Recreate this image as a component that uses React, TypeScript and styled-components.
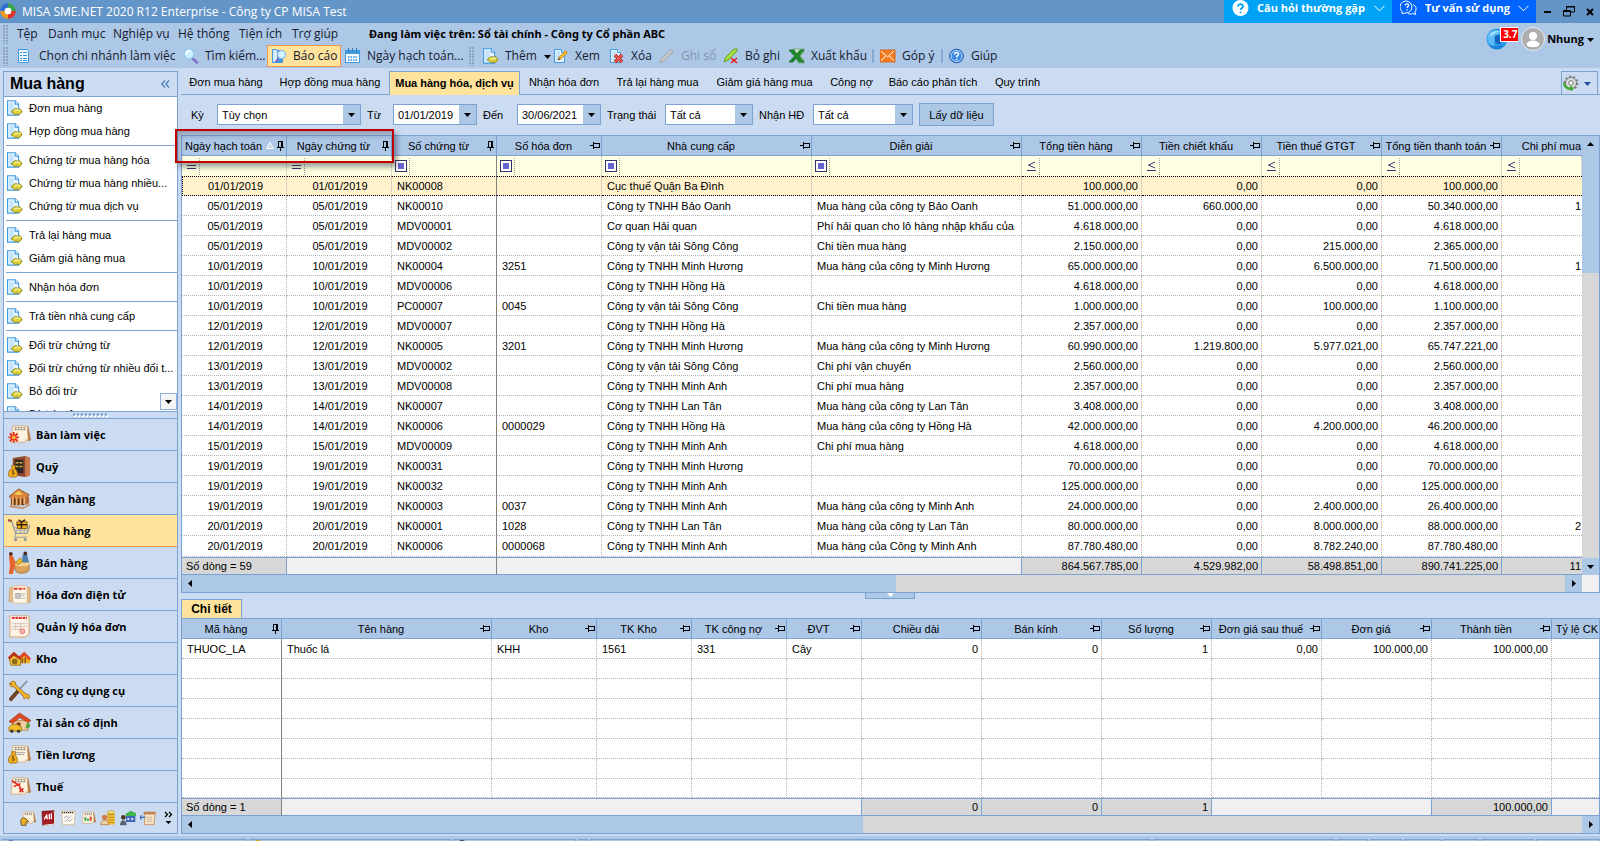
import React from 'react';
import styled, { createGlobalStyle, css } from 'styled-components';

const c = {
  title: '#6495c8',
  bar: '#adc7e7',
  panel: '#cbdcf2',
  line: '#7ba2d0',
  active: '#ffe39c',
  orange: '#f79646',
  filter: '#ffffe1',
  selected: '#fff2cc',
  dot: '#b4b4b4',
  sum: '#d7d7d7',
  sumEmpty: '#f0f0f0',
};
const uiFont = '"Open Sans", "Noto Sans", sans-serif';
const gridFont = '"Liberation Sans", Arial, sans-serif';

const GlobalStyle = createGlobalStyle`
  *, *::before, *::after { box-sizing: border-box; }
  body { margin: 0; background: ${c.panel}; }
  button, input, select { font: inherit; color: inherit; margin: 0; padding: 0; border: 0; background: none; border-radius: 0; }
  button { cursor: default; white-space: nowrap; }
  a { color: inherit; text-decoration: none; }
  svg { display: block; flex: none; }
`;

const Shell = styled.div`
  height: 100vh;
  overflow: hidden;
  display: flex;
  flex-direction: column;
  font: 11px/14px ${gridFont};
  color: #000;
  background: ${c.panel};
`;

/* ---------- title bar ---------- */
const TitleBar = styled.header`
  flex: none;
  display: flex;
  height: 23px;
  background: ${c.title};
  color: #fff;
  font: 12px/23px ${uiFont};
`;
const TitleName = styled.h1`
  flex: 1;
  margin: 0;
  padding-left: 6px;
  font: inherit;
  white-space: nowrap;
`;
const LogoBox = styled.span`
  padding-top: 3px;
`;
const HelpButton = styled.button<{ $bg: string; $w: number }>`
  display: flex;
  align-items: center;
  gap: 8px;
  width: ${(p) => p.$w}px;
  padding: 0 7px 7px 8px;
  background: ${(p) => p.$bg};
  font: bold 11px/16px ${uiFont};
  span { flex: 1; text-align: left; }
`;
const WindowButtons = styled.div`
  display: flex;
  width: 64px;
  justify-content: space-between;
  align-items: center;
  padding: 0 6px 0 8px;
`;

/* ---------- menu and toolbar ---------- */
const CommandArea = styled.div`
  flex: none;
  display: flex;
  height: 45px;
  background: ${c.bar};
  font: 12px/18px ${uiFont};
  color: #14202e;
`;
const Bars = styled.div`
  flex: 1;
  display: flex;
  flex-direction: column;
`;
const Bar = styled.div`
  display: flex;
  align-items: center;
  height: 22px;
  padding-left: 3px;
`;
const Grip = styled.i`
  width: 5px;
  height: 19px;
  margin-right: 5px;
  background-image: radial-gradient(circle at 1px 1px, #8ba3bf 1px, transparent 1px);
  background-size: 3px 3px;
`;
const MenuButton = styled.button<{ $w: number }>`
  width: ${(p) => p.$w}px;
  padding-left: 4px;
  text-align: left;
`;
const WorkingOn = styled.strong`
  white-space: nowrap;
  font: bold 11px/18px "Noto Sans", "Open Sans", sans-serif;
  color: #000;
`;
const ToolButton = styled.button<{ $w: number; $active?: boolean }>`
  display: flex;
  align-items: center;
  gap: 6px;
  width: ${(p) => p.$w}px;
  height: 22px;
  padding-left: 4px;
  ${(p) =>
    p.$active &&
    css`
      padding-left: 3px;
      background: ${c.active};
      border: 1px solid ${c.orange};
    `}
  &:disabled { color: #8494a8; }
`;
const ToolSeparator = styled.i`
  width: 2px;
  height: 14px;
  margin: 0 2px 0 1px;
  background: #87aad4;
`;
const UserArea = styled.div`
  display: flex;
  align-items: flex-start;
  padding: 4px 5px 0 0;
  font-weight: bold;
  color: #000;
`;
const GlobeBox = styled.div`
  position: relative;
  width: 35px;
  padding-top: 1px;
`;
const Badge = styled.span`
  position: absolute;
  left: 14px;
  top: 0;
  width: 18px;
  height: 15px;
  padding-left: 2px;
  border: 1px solid #fff;
  border-right: 0;
  background: #f00;
  color: #fff;
  font: bold 10px/13px ${uiFont};
  white-space: nowrap;
`;
const UserButton = styled.button`
  display: flex;
  align-items: center;
  gap: 2px;
  font-size: 11px;
`;

/* ---------- body ---------- */
const Body = styled.div`
  flex: none;
  display: flex;
  gap: 3px;
  padding: 3px 0 2px 3px;
`;
const Sidebar = styled.aside`
  flex: none;
  display: flex;
  flex-direction: column;
  width: 175px;
  border: 1px solid ${c.line};
`;
const SideHeader = styled.div`
  display: flex;
  align-items: center;
  justify-content: space-between;
  height: 25px;
  padding: 0 7px 0 6px;
  border-bottom: 1px solid ${c.line};
  color: #4f7db5;
  h2 { margin: 0; font: bold 16px/24px ${gridFont}; color: #000; }
`;
const SideList = styled.nav`
  position: relative;
  height: 315px;
  overflow: hidden;
  background: #fff;
  border-bottom: 1px solid ${c.line};
`;
const SideLink = styled.a`
  display: flex;
  align-items: center;
  gap: 6px;
  height: 23px;
  padding: 0 0 2px 3px;
  white-space: nowrap;
`;
const SideRule = styled.hr`
  height: 1px;
  margin: 2px 0 3px 2px;
  border: 0;
  background: ${c.line};
`;
const MoreButton = styled.button`
  position: absolute;
  right: 0;
  bottom: 1px;
  display: grid;
  place-items: center;
  width: 17px;
  height: 17px;
  background: #f4f4f4;
  border: 1px solid #8fb0dc;
`;
const SideSplit = styled.div`
  display: grid;
  place-items: center;
  height: 6px;
`;
const NavButton = styled.button<{ $active?: boolean; $afterActive?: boolean }>`
  display: flex;
  align-items: center;
  gap: 5px;
  height: 32px;
  padding-left: 4px;
  border-top: 1px solid ${(p) => (p.$afterActive ? c.orange : c.line)};
  background: ${(p) => (p.$active ? c.active : 'none')};
  font: bold 11px/16px ${uiFont};
  color: #000;
`;
const Tray = styled.div`
  display: flex;
  align-items: center;
  gap: 4px;
  height: 30px;
  padding: 0 4px 0 16px;
  border-top: 1px solid ${c.line};
`;
const TrayMore = styled.button`
  flex: 1;
  display: flex;
  justify-content: flex-end;
`;

const Content = styled.main`
  flex: 1;
  min-width: 0;
  display: flex;
  flex-direction: column;
`;
const TabBar = styled.div`
  display: flex;
  height: 24px;
  border-bottom: 1px solid ${c.line};
`;
const Tab = styled.button<{ $w: number; $active?: boolean }>`
  flex: none;
  width: ${(p) => p.$w}px;
  height: 23px;
  padding-bottom: 1px;
  ${(p) =>
    p.$active &&
    css`
      height: 24px;
      font-weight: bold;
      color: #000;
      background: ${c.active};
      border: 1px solid ${c.line};
      border-bottom: 0;
    `}
`;
const GearButton = styled.button`
  display: flex;
  align-items: center;
  justify-content: space-between;
  width: 37px;
  height: 24px;
  margin: 0 2px 0 auto;
  padding: 0 5px 0 1px;
  border: 1px solid ${c.line};
`;
const Filters = styled.form`
  display: flex;
  align-items: center;
  gap: 6px;
  height: 40px;
  padding: 0 0 1px 10px;
`;
const Label = styled.label<{ $w: number }>`
  width: ${(p) => p.$w}px;
  white-space: nowrap;
`;
const Field = styled.span<{ $w: number }>`
  display: flex;
  width: ${(p) => p.$w}px;
  height: 21px;
  background: #fff;
  border: 1px solid ${c.line};
  select, input { flex: 1; min-width: 0; padding-left: 4px; appearance: none; outline: 0; }
`;
const FieldArrow = styled.i`
  display: grid;
  place-items: center;
  width: 17px;
  margin-left: -1px;
  background: ${c.bar};
  pointer-events: none;
`;
const LoadButton = styled.button`
  width: 75px;
  height: 23px;
  background: ${c.bar};
  border: 1px solid ${c.line};
`;

/* ---------- grids ---------- */
const GridFrame = styled.section`
  position: relative;
  border: 1px solid ${c.line};
  background: #fff;
`;
const GridRow = styled.div`
  display: flex;
`;
const Table = styled.table<{ $lastRow: number }>`
  flex: 1;
  width: 100%;
  min-width: 0;
  table-layout: fixed;
  border-collapse: separate;
  border-spacing: 0;
  tbody tr:last-child td { height: ${(p) => p.$lastRow}px; }
`;
const Th = styled.th`
  height: 20px;
  padding: 0;
  font-weight: normal;
  background: ${c.bar};
  border-right: 1px solid ${c.line};
  border-bottom: 1px solid ${c.line};
  overflow: hidden;
  &:last-child { border-right: 0; }
`;
const ThInner = styled.div<{ $end?: boolean }>`
  display: flex;
  align-items: center;
  padding-right: 1px;
  white-space: nowrap;
  span { flex: 1; text-align: ${(p) => (p.$end ? 'right' : 'center')}; }
`;
const Td = styled.td<{ $align?: string; $pin?: boolean; $sel?: boolean }>`
  height: 20px;
  padding: 0 3px 0 5px;
  text-align: ${(p) => p.$align || 'left'};
  white-space: nowrap;
  overflow: hidden;
  border-right: 1px ${(p) => (p.$pin ? 'solid #808080' : `dotted ${c.dot}`)};
  border-bottom: 1px dotted ${c.dot};
  &:last-child { border-right: 0; padding-right: 1px; }
  ${(p) =>
    p.$sel &&
    css`
      background: ${c.selected};
      border-top: 1px dotted #000;
      border-bottom: 1px dotted #000;
      &:first-child { border-left: 1px dotted #000; }
    `}
`;
const FilterTd = styled.td<{ $pin?: boolean }>`
  height: 20px;
  padding: 0;
  background: ${c.filter};
  border-right: 1px ${(p) => (p.$pin ? 'solid #808080' : `dotted ${c.dot}`)};
`;
const FilterCell = styled.div`
  display: flex;
  align-items: center;
  height: 19px;
  padding-left: 2px;
  color: #33336b;
  button { display: grid; place-items: center; width: 15px; height: 17px; }
  input { flex: 1; min-width: 0; height: 17px; border-left: 1px dotted #999; outline: 0; }
`;
const SumTd = styled.td<{ $filled?: boolean; $pin?: boolean }>`
  height: 18px;
  padding: 0 3px 0 4px;
  text-align: right;
  white-space: nowrap;
  background: ${(p) => (p.$filled ? c.sum : c.sumEmpty)};
  border: solid ${c.line};
  border-width: 1px 1px 1px 0;
  ${(p) => p.$pin && 'border-right-color: #808080;'}
  &:first-child { text-align: left; }
  &:last-child { border-right: 0; padding-right: 1px; }
`;
const VScroll = styled.div`
  flex: none;
  display: flex;
  flex-direction: column;
  width: 17px;
  background: ${c.sum};
`;
const ScrollButton = styled.button`
  flex: none;
  display: grid;
  place-items: center;
  width: 17px;
  height: 17px;
  background: ${c.bar};
`;
const VThumb = styled.div`
  height: 120px;
  margin-bottom: auto;
  background: ${c.bar};
`;
const HScroll = styled.div`
  display: flex;
  height: 17px;
  background: ${c.sum};
`;
const HTrack = styled.div`
  flex: 1;
`;
const HThumb = styled.div<{ $pct: number }>`
  width: ${(p) => p.$pct}%;
  height: 17px;
  background: ${c.bar};
`;
const Corner = styled.div`
  width: 17px;
  background: ${c.sumEmpty};
`;
const Highlight = styled.div`
  position: absolute;
  left: -7px;
  top: -7px;
  width: 219px;
  height: 34px;
  border: 2px solid #c00000;
  box-shadow: 3px 4px 5px rgba(40, 50, 70, 0.45), inset 3px 4px 5px rgba(40, 50, 70, 0.35);
  pointer-events: none;
`;
const SplitBar = styled.div`
  display: flex;
  justify-content: center;
  height: 6px;
  padding-right: 1px;
`;
const SplitHandle = styled.button`
  display: grid;
  place-items: start center;
  width: 50px;
  height: 6px;
  background: ${c.bar};
  border: 1px solid ${c.line};
  border-top: 0;
`;
const DetailTab = styled.button`
  align-self: flex-start;
  width: 61px;
  height: 19px;
  background: ${c.active};
  border: 1px solid ${c.line};
  border-bottom: 0;
  font-weight: bold;
  font-size: 12px;
  color: #000;
`;

/* ---------- status bar ---------- */
const StatusBar = styled.footer`
  flex: none;
  display: flex;
  gap: 2px;
  height: 24px;
  padding: 3px 0 0 2px;
  background: ${c.bar};
`;
const StatusCell = styled.div<{ $w?: number }>`
  ${(p) => (p.$w ? `width: ${p.$w}px;` : 'flex: 1;')}
  border: 1px solid ${c.line};
  padding-left: 3px;
`;
const StatusDot = styled.i<{ $color: string }>`
  display: block;
  width: 10px;
  height: 10px;
  border-radius: 5px 5px 0 0;
  background: ${(p) => p.$color};
`;

/* ---------- icons ---------- */
const Tri = ({ dir, color = '#000' }: { dir: 'up' | 'down' | 'left' | 'right'; color?: string }) => {
  const d = { up: 'M1 6h7L4.500 2z', down: 'M1 3h7L4.500 7z', left: 'M6 1v7L2 4.500z', right: 'M3 1v7l4-3.500z' }[dir];
  return (
    <svg width="9" height="9" viewBox="0 0 9 9"><path d={d} fill={color} /></svg>
  );
};
const Chevron = () => (
  <svg width="11" height="7" viewBox="0 0 11 7" fill="none" stroke="#fff"><path d="M.5 .8L5.500 5.800l5-5" /></svg>
);
const Pin = ({ up }: { up?: boolean }) => (
  <svg width="10" height="10" viewBox="0 0 10 10" fill="none" stroke="#000" shapeRendering="crispEdges">
    {up ? (
      <path d="M3.500 6V.5h3V6M7.500 0v6M2 6.500h7M5.500 7v3" />
    ) : (
      <path d="M0 4.500h3M3.500 1v7M4 2.500h5.500v4M4 6.500h6" />
    )}
  </svg>
);
const Page = () => (
  <>
    <path d="M1.500 1.500h7l3 3v10h-10z" fill="#e9f5ff" stroke="#3f9be0" />
    <path d="M3 3h4v10H3z" fill="#c4e4fb" />
    <path d="M8.500 1.500v3h3" fill="#fff" stroke="#3f9be0" />
  </>
);
const Ic = ({ children, s = 16 }: { children: React.ReactNode; s?: number }) => (
  <svg width={s} height={s} viewBox={s > 16 ? '0 0 24 24' : '0 0 16 16'} aria-hidden="true">{children}</svg>
);
const DocIcon = () => (
  <svg width="16" height="16" viewBox="1 0.8 14.500 14.500" aria-hidden="true">
    <Page />
    <path d="M7 9.500l2-1 1.500.7 2-.5 1 1.300 1.200.9-.9 1.600-1.500 1.500-2.300-.4-2 .4-1.200-1.300L4.800 11.500z" fill="#dccf3c" stroke="#94871a" strokeWidth=".9" />
    <path d="M7.500 10.800c2-1 4-1 5.500-.5" stroke="#fbf6a0" fill="none" />
  </svg>
);
const toolIcons: Record<string, React.ReactNode> = {
  branch: <Ic><path d="M1.500 1.500h8l2 2v11h-10z" fill="#eef7ff" stroke="#3f9be0" /><path d="M3 4.500h2m1 0h4M3 7.500h2m1 0h4M3 10.500h2m1 0h4M3 12.500h2m1 0h4" stroke="#3a8fd8" /></Ic>,
  find: <Ic><path d="M9.500 10.500l4.500 4" stroke="#8177c7" strokeWidth="2.600" strokeLinecap="round" /><circle cx="6" cy="6" r="5" fill="#cdefff" stroke="#8cc5ec" strokeWidth="1.200" /><path d="M3 6a3 3 0 0 1 4-3" stroke="#fff" fill="none" strokeWidth="1.500" /></Ic>,
  report: <Ic><path d="M1.500 2.500h10v12h-10z" fill="#3f9be0" stroke="#3f9be0" /><path d="M1.500 1.500h4l1 1.500V14l-5 .5z" fill="#d8eeff" stroke="#3f9be0" /><path d="M8 10l-3.500 4" stroke="#7e74c4" strokeWidth="2" /><circle cx="10.500" cy="6.500" r="4" fill="#d6f2ff" stroke="#86b7e0" strokeWidth="1.200" /></Ic>,
  calendar: <Ic><rect x=".5" y="2.500" width="14" height="12" fill="#f5fbff" stroke="#3f9be0" /><path d="M1 3h13v3H1z" fill="#3f9be0" /><path d="M3.500 0v4M7.500 0v4M11.500 0v4" stroke="#2f79bb" /><path d="M3 9h9M3 12h9" stroke="#3a8fd8" strokeWidth="1.500" strokeDasharray="1.500 1" /></Ic>,
  add: <DocIcon />,
  view: <Ic><Page /><path d="M5 12l1-3 6.500-6.500 2 2L8 11z" fill="#f4b934" stroke="#b9801d" strokeWidth=".7" /><path d="M5 12l.8-2.300 1.500 1.500z" fill="#5a4a2c" /></Ic>,
  remove: <Ic><Page /><path d="M6 7l7 7m0-7l-7 7" stroke="#a82323" strokeWidth="3.400" /><path d="M6 7l7 7m0-7l-7 7" stroke="#e55a4c" strokeWidth="2" /></Ic>,
  post: <Ic><path d="M1 15l1.500-4.500L11 2l3 0 0 2-8.500 9z" fill="#c3c6ca" stroke="#9da2a8" strokeWidth=".8" /></Ic>,
  unpost: <Ic><path d="M1 14l1.500-4.500L11 1l3 0 0 2-8.500 9z" fill="#a5dd3e" stroke="#5b9a1b" strokeWidth=".9" /><path d="M8 10l6 5m0-5l-6 5" stroke="#e11" strokeWidth="1.400" /></Ic>,
  excel: <Ic><path d="M4 1h11v3l-4 4 4 4v3H9z" fill="#cfe8cf" stroke="#4d9a52" strokeWidth=".7" /><path d="M0 2h5l3 4 3-4h4l-5 6 5 6h-5L7.500 10 4 14H0l5.500-6z" fill="#1f8a2d" stroke="#0f5f1b" strokeWidth=".7" /></Ic>,
  mail: <Ic><rect y="2" width="15" height="12" fill="#f47b20" stroke="#d65f0c" strokeWidth=".8" /><path d="M1 3l6.500 6L14 3M1 13l4.500-5M14 13L9.500 8" fill="none" stroke="#fff" /></Ic>,
  help: <Ic><circle cx="7.500" cy="8" r="6.800" fill="#3c8be0" stroke="#1c5aa5" /><circle cx="7.500" cy="8" r="5.600" fill="none" stroke="#b9dcfb" /><path d="M5.500 6.500c0-3 4.300-2.600 4 0-.2 1.200-1.800 1.300-1.900 2.800M7.600 10.800v1.400" fill="none" stroke="#fff" strokeWidth="1.500" /></Ic>,
};

const Card = ({ children, fill = '#fbf3e0' }: { children?: React.ReactNode; fill?: string }) => (
  <>
    <path d="M19 3l2 0 3 15-3 1z" fill="#b57a45" />
    <path d="M5 3h15l1 14-3 3H3z" fill={fill} stroke="#d0a06c" strokeWidth=".8" />
    <path d="M18 20l3-3-3 .5z" fill="#e0b27c" />
    <path d="M7 5h12M7 7h11" stroke="#6b5a4a" strokeDasharray="2 1" />
    {children}
  </>
);
const Bag = ({ x = 0, y = 0 }) => (
  <g transform={`translate(${x} ${y})`}>
    <path d="M4 1h4l-1 3c3 2 4 8 1 9H2c-3-2-1-8 2-9z" fill="#f4b321" stroke="#9a6310" strokeWidth=".8" />
    <path d="M6.500 6H4.500v2h2v2h-2.500M5.200 5v6" stroke="#7d4a08" fill="none" strokeWidth=".8" />
  </g>
);
const navIcons: React.ReactNode[] = [
  <Card><path d="M6 9.500v11M.5 15h11M2 11l8 8m0-8l-8 8" stroke="#e5301a" strokeWidth="2" /><circle cx="6" cy="15" r="2" fill="#ffb52e" /></Card>,
  <><path d="M5 3l13-2 5 2v18l-5 2L5 21z" fill="#93492d" /><path d="M18 1l5 2v18l-5 2z" fill="#c77b4e" /><path d="M7 5h9v14H7z" fill="#2d2825" /><path d="M8 8h8M8 12h8" stroke="#d7b13b" strokeWidth="1.500" strokeDasharray="3 1" /><Bag y={10} /></>,
  <><path d="M1 10L11 2l11 6-3 4H4z" fill="#d9813c" stroke="#8b4a1d" strokeWidth=".8" /><path d="M6 8l5-4 5 4z" fill="#f6cf54" /><path d="M3 12h14v7H3z" fill="#6a3417" /><path d="M5 11v8M9 11v8M13 11v8M17 11v7" stroke="#f0b264" strokeWidth="2" /><path d="M1 19l15 2 7-4v2l-7 4L2 21z" fill="#c5916b" /><path d="M18 11l4-1v7l-4 2z" fill="#b4673a" /></>,
  <><path d="M0 2l4 1 4 12h12l3-9" fill="none" stroke="#8d99a8" strokeWidth="1.300" /><path d="M6 9h16M7 12h14M9 9v6m4-6v6m4-6v6" stroke="#a8b2bf" /><path d="M9 3h11v7H10z" fill="#efae1f" stroke="#6a3f0a" strokeWidth=".8" /><path d="M14 2v8M9 6h11M11 1l3 2 4-2" stroke="#3b220a" strokeWidth="1.600" fill="none" /><path d="M8 15l-1 4h13" fill="none" stroke="#8d99a8" /><circle cx="8" cy="21.500" r="1.600" fill="#8b93a0" /><circle cx="18" cy="21.500" r="1.600" fill="#8b93a0" /><path d="M0 1l4 1" stroke="#a84c33" strokeWidth="2" /></>,
  <><path d="M6 13c3-3 13-3 16 0v7c-3 4-11 4-14 1z" fill="#dba25a" stroke="#9a6628" strokeWidth=".8" /><ellipse cx="15" cy="13" rx="8" ry="3" fill="#f4d391" /><path d="M1 5h4l3 7-3 12H1l1-9z" fill="#e8642c" /><circle cx="3" cy="3" r="2" fill="#5b2e1a" /><path d="M15 4h5l2 8h-7z" fill="#4d7fae" /><circle cx="18" cy="2.500" r="2" fill="#4a2a1b" /><path d="M8 12l5-5 2 4-4 3z" fill="#f2bd25" stroke="#86580f" strokeWidth=".6" /></>,
  <><path d="M2 5h3v14H1zM20 5h3v15h-3z" fill="#e6bf8f" stroke="#bf8d53" strokeWidth=".7" /><path d="M5 3h15v18H5z" fill="#fff8ea" stroke="#d8b284" strokeWidth=".8" /><path d="M6 6h12" stroke="#e33b2e" strokeWidth="2" strokeDasharray="4 1" /><path d="M8 11h5v5H8zM14 11h4M14 13h4M14 16h4" fill="#c9c9c9" stroke="#9b9b9b" strokeWidth=".7" /></>,
  <><path d="M2 1h20v19l-4 3H2z" fill="#fdf2e4" stroke="#d2a068" /><path d="M3 1h18v4H3z" fill="#fff" /><path d="M4 3h16" stroke="#e5352b" strokeWidth="2.500" strokeDasharray="3 .7" /><path d="M4 9h16M4 12h16M4 15h10M8 8v8M13 8v8" stroke="#c9bdb4" strokeWidth=".8" /><circle cx="15" cy="17" r="2.500" fill="#f5b9b4" stroke="#e0716a" /></>,
  <><path d="M11 12l6-6 6 7v4h-9z" fill="#f0b026" /><path d="M10 11l7-6 7 7-2 2-5-5-5 5z" fill="#e34a23" /><path d="M1 11l6-5 6 6v7H3z" fill="#f3c536" stroke="#8b5b12" strokeWidth=".8" /><path d="M0 11l6-6 8 7-2 1-6-4-4 4z" fill="#b93118" /><circle cx="7" cy="15" r="3" fill="#8b6a1a" /><path d="M15 12v5M18 11v6" stroke="#7d5310" strokeWidth="1.500" /></>,
  <><path d="M20 2L8 15" stroke="#8d97a5" strokeWidth="2" /><path d="M10 13l-7 8" stroke="#6f4326" strokeWidth="4" strokeLinecap="round" /><path d="M3 4c1-3 6-2 5 2l11 10c3-1 5 3 2 5l-2-2-2 2c-1-1-1-2-1-3L6 8C4 9 1 7 2 4l2 2z" fill="#f2b52b" stroke="#8f5c16" strokeWidth=".8" /></>,
  <><path d="M4 10h17v10H6z" fill="#f0cda0" stroke="#ad7038" strokeWidth=".7" /><path d="M1 11L12 2l12 8-3 2-9-5-7 6z" fill="#e04a22" stroke="#8d2b11" strokeWidth=".6" /><path d="M9 12h4v5H9z" fill="#7a3a1b" /><path d="M20 12c4 0 4 5 1 6h-3z" fill="#5fa63e" /><path d="M1 17l3-3h6l4 3v4H1z" fill="#f1bf25" stroke="#8b6011" strokeWidth=".7" /><circle cx="4" cy="21" r="1.700" fill="#333" /><circle cx="11" cy="21" r="1.700" fill="#333" /></>,
  <><Card><path d="M7 10h11M7 12h10" stroke="#a9a29a" /></Card><Bag y={8} /></>,
  <><Card><path d="M4 6l8 5M14 17L11 9M6 12l7-3M12 14l4 4m0-4l-4 4" stroke="#e2231c" strokeWidth="1.600" /></Card></>,
];
const trayIcons: React.ReactNode[] = [
  <><Card /><path d="M1 15l4-4 5 3 3 4H9v5H2z" fill="#f0b024" stroke="#2d2417" /></>,
  <><path d="M3 2l18-1v20l-17 2z" fill="#a31c22" stroke="#6e0e13" /><path d="M20 3l2 1v17l-17 2" fill="none" stroke="#f3e4d0" strokeWidth="1.500" /><path d="M6 14l4-6 1 6m3-8v8m3-9v9" stroke="#fff" strokeWidth="2" fill="none" /></>,
  <><path d="M2 2h21l-2 20H4z" fill="#fffaf0" stroke="#cfa878" /><path d="M3 4h18" stroke="#333" strokeWidth="2" strokeDasharray="2 1" /><path d="M6 12l4-3 3 4 4-4M7 18l4-4 3 3 5-4" stroke="#a79bb6" fill="none" strokeWidth="1.500" /></>,
  <Card><path d="M8 16v-5M12 16v-3" stroke="#39a34a" strokeWidth="3" /><path d="M16 16v-6" stroke="#e33b2e" strokeWidth="3" /></Card>,
  <><path d="M11 3h11v19H11z" fill="#f2c037" /><path d="M11 7h11M11 11h11M11 15h11M11 19h11" stroke="#a97612" /><ellipse cx="16.500" cy="3.500" rx="5.500" ry="2.300" fill="#fbe48a" stroke="#b98a22" /><circle cx="7" cy="11" r="4" fill="#d27b48" /><path d="M1 22c0-9 12-9 12 0z" fill="#efd1a4" stroke="#b26b2a" /></>,
  <><path d="M9 7l7-5 7 4v12H9z" fill="#3f68b8" /><path d="M8 6l8-5 8 4v4H9z" fill="#40b54c" /><path d="M11 12h3v3h-3zM17 12h3v3h-3z" fill="#dce7fa" /><circle cx="5" cy="11" r="3.500" fill="#4b3324" /><path d="M0 23c0-10 10-10 10 0z" fill="#5b6473" /></>,
  <><path d="M6 3h17l-2 19H7z" fill="#f6e0c4" stroke="#b9783f" /><path d="M6 5h17" stroke="#b9783f" strokeWidth="3" /><path d="M10 11h8M10 14h8M10 17h8" stroke="#b7a893" /><path d="M0 11h8M2 8l-2 3 2 3" stroke="#3a6cb7" strokeWidth="2" fill="none" /></>,
];

/* ---------- data ---------- */
const menus: [string, number][] = [['Tệp', 31], ['Danh mục', 65], ['Nghiệp vụ', 65], ['Hệ thống', 61], ['Tiện ích', 53], ['Trợ giúp', 81]];
type Tool = { icon: string; text: string; w: number; active?: boolean; disabled?: boolean; caret?: boolean };
const toolGroups: Tool[][] = [
  [
    { icon: 'branch', text: 'Chọn chi nhánh làm việc', w: 166 },
    { icon: 'find', text: 'Tìm kiếm...', w: 88 },
    { icon: 'report', text: 'Báo cáo', w: 74, active: true },
    { icon: 'calendar', text: 'Ngày hạch toán...', w: 128 },
  ],
  [
    { icon: 'add', text: 'Thêm', w: 70, caret: true },
    { icon: 'view', text: 'Xem', w: 56 },
    { icon: 'remove', text: 'Xóa', w: 50 },
    { icon: 'post', text: 'Ghi sổ', w: 64, disabled: true },
    { icon: 'unpost', text: 'Bỏ ghi', w: 66 },
    { icon: 'excel', text: 'Xuất khẩu', w: 86 },
  ],
  [{ icon: 'mail', text: 'Góp ý', w: 64 }],
  [{ icon: 'help', text: 'Giúp', w: 60 }],
];
const sideGroups = [
  ['Đơn mua hàng', 'Hợp đồng mua hàng'],
  ['Chứng từ mua hàng hóa', 'Chứng từ mua hàng nhiều...', 'Chứng từ mua dịch vụ'],
  ['Trả lại hàng mua', 'Giảm giá hàng mua'],
  ['Nhận hóa đơn'],
  ['Trả tiền nhà cung cấp'],
  ['Đối trừ chứng từ', 'Đối trừ chứng từ nhiều đối t...', 'Bỏ đối trừ', 'Bù trừ công nợ'],
];
const navs = ['Bàn làm việc', 'Quỹ', 'Ngân hàng', 'Mua hàng', 'Bán hàng', 'Hóa đơn điện tử', 'Quản lý hóa đơn', 'Kho', 'Công cụ dụng cụ', 'Tài sản cố định', 'Tiền lương', 'Thuế'];
const activeNav = navs.indexOf('Mua hàng');
const tabs: [string, number][] = [
  ['Đơn mua hàng', 90], ['Hợp đồng mua hàng', 118], ['Mua hàng hóa, dịch vụ', 131], ['Nhận hóa đơn', 88], ['Trả lại hàng mua', 99],
  ['Giảm giá hàng mua', 115], ['Công nợ', 59], ['Báo cáo phân tích', 104], ['Quy trình', 65],
];

type Col = { t: string; w?: number; align?: string; up?: boolean; op?: string; noPin?: boolean };
const cols: Col[] = [
  { t: 'Ngày hạch toán', w: 105, align: 'center', up: true, op: '=' },
  { t: 'Ngày chứng từ', w: 105, align: 'center', up: true, op: '=' },
  { t: 'Số chứng từ', w: 105, up: true, op: 'box' },
  { t: 'Số hóa đơn', w: 105, op: 'box' },
  { t: 'Nhà cung cấp', w: 210, op: 'box' },
  { t: 'Diễn giải', w: 210, op: 'box' },
  { t: 'Tổng tiền hàng', w: 120, align: 'right', op: '≤' },
  { t: 'Tiền chiết khấu', w: 120, align: 'right', op: '≤' },
  { t: 'Tiền thuế GTGT', w: 120, align: 'right', op: '≤' },
  { t: 'Tổng tiền thanh toán', w: 120, align: 'right', op: '≤' },
  { t: 'Chi phí mua', align: 'right', op: '≤', noPin: true },
];
const rows = `01/01|NK00008||Cục thuế Quận Ba Đình||100.000,00|0,00|0,00|100.000,00|
05/01|NK00010||Công ty TNHH Bảo Oanh|Mua hàng của công ty Bảo Oanh|51.000.000,00|660.000,00|0,00|50.340.000,00|1
05/01|MDV00001||Cơ quan Hải quan|Phí hải quan cho lô hàng nhập khẩu của|4.618.000,00|0,00|0,00|4.618.000,00|
05/01|MDV00002||Công ty vận tải Sông Công|Chi tiền mua hàng|2.150.000,00|0,00|215.000,00|2.365.000,00|
10/01|NK00004|3251|Công ty TNHH Minh Hương|Mua hàng của công ty Minh Hương|65.000.000,00|0,00|6.500.000,00|71.500.000,00|1
10/01|MDV00006||Công ty TNHH Hồng Hà||4.618.000,00|0,00|0,00|4.618.000,00|
10/01|PC00007|0045|Công ty vận tải Sông Công|Chi tiền mua hàng|1.000.000,00|0,00|100.000,00|1.100.000,00|
12/01|MDV00007||Công ty TNHH Hồng Hà||2.357.000,00|0,00|0,00|2.357.000,00|
12/01|NK00005|3201|Công ty TNHH Minh Hương|Mua hàng của công ty Minh Hương|60.990.000,00|1.219.800,00|5.977.021,00|65.747.221,00|
13/01|MDV00002||Công ty vận tải Sông Công|Chi phí vận chuyển|2.560.000,00|0,00|0,00|2.560.000,00|
13/01|MDV00008||Công ty TNHH Minh Anh|Chi phí mua hàng|2.357.000,00|0,00|0,00|2.357.000,00|
14/01|NK00007||Công ty TNHH Lan Tân|Mua hàng của công ty Lan Tân|3.408.000,00|0,00|0,00|3.408.000,00|
14/01|NK00006|0000029|Công ty TNHH Hồng Hà|Mua hàng của công ty Hồng Hà|42.000.000,00|0,00|4.200.000,00|46.200.000,00|
15/01|MDV00009||Công ty TNHH Minh Anh|Chi phí mua hàng|4.618.000,00|0,00|0,00|4.618.000,00|
19/01|NK00031||Công ty TNHH Minh Hương||70.000.000,00|0,00|0,00|70.000.000,00|
19/01|NK00032||Công ty TNHH Minh Anh||125.000.000,00|0,00|0,00|125.000.000,00|
19/01|NK00003|0037|Công ty TNHH Minh Anh|Mua hàng của công ty Minh Anh|24.000.000,00|0,00|2.400.000,00|26.400.000,00|
20/01|NK00001|1028|Công ty TNHH Lan Tân|Mua hàng của công ty Lan Tân|80.000.000,00|0,00|8.000.000,00|88.000.000,00|2
20/01|NK00006|0000068|Công ty TNHH Minh Anh|Mua hàng của Công ty Minh Anh|87.780.480,00|0,00|8.782.240,00|87.780.480,00|`
  .split('\n')
  .map((line) => {
    const [date, ...rest] = line.split('|');
    return [`${date}/2019`, `${date}/2019`, ...rest];
  });

const detailCols: Col[] = [
  { t: 'Mã hàng', w: 100, up: true },
  { t: 'Tên hàng', w: 210 },
  { t: 'Kho', w: 105 },
  { t: 'TK Kho', w: 95 },
  { t: 'TK công nợ', w: 95 },
  { t: 'ĐVT', w: 75 },
  { t: 'Chiều dài', w: 120, align: 'right' },
  { t: 'Bán kính', w: 120, align: 'right' },
  { t: 'Số lượng', w: 110, align: 'right' },
  { t: 'Đơn giá sau thuế', w: 110, align: 'right' },
  { t: 'Đơn giá', w: 110, align: 'right' },
  { t: 'Thành tiền', w: 120, align: 'right' },
  { t: 'Tỷ lệ CK', noPin: true },
];
const detailRow = ['THUOC_LA', 'Thuốc lá', 'KHH', '1561', '331', 'Cây', '0', '0', '1', '0,00', '100.000,00', '100.000,00', ''];

const Head = ({ list, sorted }: { list: Col[]; sorted?: boolean }) => (
  <tr>
    {list.map((col, i) => (
      <Th key={col.t} scope="col">
        <ThInner $end={col.noPin}>
          <span>{col.t}</span>
          {sorted && i === 0 && <svg width="10" height="9" viewBox="0 0 10 9"><path d="M1.500 7.500h7L5 1.500z" fill="#c9daf0" stroke="#fff" /></svg>}
          {!col.noPin && <Pin up={col.up} />}
        </ThInner>
      </Th>
    ))}
  </tr>
);
const Cols = ({ list }: { list: Col[] }) => (
  <colgroup>
    {list.map((col) => <col key={col.t} width={col.w} />)}
  </colgroup>
);
const Op = ({ op }: { op?: string }) =>
  op === 'box' ? (
    <svg width="13" height="13" viewBox="0 0 13 13"><rect x=".5" y=".5" width="11" height="11" fill="#fff" stroke="#33336b" /><rect x="3" y="3" width="6" height="6" fill="#6464cc" /></svg>
  ) : op === '=' ? (
    <svg width="9" height="9" viewBox="0 0 9 9"><path d="M0 3.500h9M0 6.500h9" stroke="#33336b" /></svg>
  ) : (
    <svg width="9" height="10" viewBox="0 0 9 10" fill="none" stroke="#33336b"><path d="M8 1L1.500 4l6.500 3M0 9.500h9" /></svg>
  );

export default function App() {
  return (
    <Shell>
      <GlobalStyle />
      <TitleBar>
        <LogoBox>
          <svg width="16" height="16" viewBox="0 0 16 16" fill="none" strokeWidth="4.500">
            <circle cx="8" cy="8" r="3.500" fill="#fff" />
            <path d="M2.500 8A5.500 5.500 0 0 1 8 2.500" stroke="#2f6fd0" /><path d="M8 2.500A5.500 5.500 0 0 1 13.500 8" stroke="#39a548" />
            <path d="M13.500 8A5.500 5.500 0 0 1 8 13.500" stroke="#e0342b" /><path d="M8 13.500A5.500 5.500 0 0 1 2.500 8" stroke="#f19a1f" />
            <circle cx="8" cy="8" r="3.300" fill="#fff" />
          </svg>
        </LogoBox>
        <TitleName>MISA SME.NET 2020 R12 Enterprise - Công ty CP MISA Test</TitleName>
        <HelpButton $bg="#00a2f5" $w={168}>
          <svg width="17" height="17" viewBox="0 0 17 17"><circle cx="8.500" cy="8" r="8" fill="#fff" /><path d="M6 6.500c0-3.500 5-3 5 0 0 1.500-2.300 1.600-2.400 3.500M8.600 11.500v1.800" fill="none" stroke="#00a2f5" strokeWidth="1.800" /></svg>
          <span>Câu hỏi thường gặp</span>
          <Chevron />
        </HelpButton>
        <HelpButton $bg="#0064ff" $w={144}>
          <svg width="17" height="16" viewBox="0 0 17 16" fill="none" stroke="#fff"><path d="M2 11.500A6 6 0 1 1 6 13l-4 .5z" /><path d="M13 4.500c4 2 3.500 5.500 2 7l.5 3-3-1c-1.500.8-3 .7-4.500 0" /><path d="M5.300 5.500c0-2.500 3.500-2 3.300 0-.2 1-1.500 1.200-1.500 2.500M7 9.200v1.300" strokeWidth="1.300" /></svg>
          <span>Tư vấn sử dụng</span>
          <Chevron />
        </HelpButton>
        <WindowButtons>
          <button aria-label="Thu nhỏ"><svg width="7" height="8" viewBox="0 0 7 8"><path d="M0 4h7" stroke="#000" strokeWidth="2" /></svg></button>
          <button aria-label="Khôi phục"><svg width="12" height="11" viewBox="0 0 12 11" fill="none" stroke="#000"><path d="M3.500 4V.5h8v5.500H7.500M3 1h9" /><path d="M.5 4.500h7v5.500h-7zM0 5.500h8" /></svg></button>
          <button aria-label="Đóng"><svg width="8" height="8" viewBox="0 0 8 8"><path d="M1 1l6 6m0-6L1 7" stroke="#000" strokeWidth="2" /></svg></button>
        </WindowButtons>
      </TitleBar>

      <CommandArea>
        <Bars>
          <Bar>
            <Grip />
            {menus.map(([t, w]) => <MenuButton key={t} $w={w}>{t}</MenuButton>)}
            <WorkingOn>Đang làm việc trên: Sổ tài chính - Công ty Cổ phần ABC</WorkingOn>
          </Bar>
          <Bar>
            <Grip />
            {toolGroups.map((group, g) => (
              <React.Fragment key={g}>
                {g === 1 && <Grip />}
                {g > 1 && <ToolSeparator />}
                {group.map((tool) => (
                  <ToolButton key={tool.text} $w={tool.w} $active={tool.active} disabled={tool.disabled}>
                    {toolIcons[tool.icon]}
                    {tool.text}
                    {tool.caret && <Tri dir="down" />}
                  </ToolButton>
                ))}
              </React.Fragment>
            ))}
          </Bar>
        </Bars>
        <UserArea>
          <GlobeBox>
            <svg width="22" height="22" viewBox="0 0 22 22"><circle cx="11" cy="11" r="10.500" fill="#2a9be8" /><path d="M3 5c4-4 10-4 13 0-5 1-8 4-8 13C3 18-1 11 3 5z" fill="#5dbcf5" /><path d="M9 8c3-2 7-1 9 3l-4 5c-4 1-6-3-5-8z" fill="#1263bd" /><path d="M3 16c5 3 11 3 15 0-3 7-12 7-15 0z" fill="#1b7fd6" /><path d="M4 6c3-3 7-4 10-2-4 0-7 2-9 5z" fill="#a5e0fd" /></svg>
            <Badge>3.7</Badge>
          </GlobeBox>
          <UserButton>
            <svg width="24" height="24" viewBox="0 0 24 24"><circle cx="12" cy="12" r="11.500" fill="#adadad" stroke="#e8edf4" /><circle cx="12" cy="9" r="4" fill="#fff" /><path d="M5.500 18c0-6 13-6 13 0-2 3-11 3-13 0z" fill="#fff" /></svg>
            Nhung
            <Tri dir="down" />
          </UserButton>
        </UserArea>
      </CommandArea>

      <Body>
        <Sidebar>
          <SideHeader>
            <h2>Mua hàng</h2>
            <svg width="9" height="8" viewBox="0 0 9 8" fill="none" stroke="currentColor" strokeWidth="1.200"><path d="M4 .5L.8 4 4 7.500M8 .5L4.800 4 8 7.500" /></svg>
          </SideHeader>
          <SideList>
            {sideGroups.map((group, i) => (
              <React.Fragment key={i}>
                {i > 0 && <SideRule />}
                {group.map((t) => <SideLink key={t} href="#"><DocIcon />{t}</SideLink>)}
              </React.Fragment>
            ))}
            <MoreButton aria-label="Cuộn xuống"><Tri dir="down" /></MoreButton>
          </SideList>
          <SideSplit>
            <svg width="36" height="4" viewBox="0 0 36 4"><path d="M1 3h35" stroke="#fff" strokeWidth="2" strokeDasharray="2 2" /><path d="M0 1.500h35" stroke="#6c94c8" strokeWidth="2" strokeDasharray="2 2" /></svg>
          </SideSplit>
          {navs.map((t, i) => (
            <NavButton key={t} $active={i === activeNav} $afterActive={i === activeNav + 1}>
              <Ic s={23}>{navIcons[i]}</Ic>
              {t}
            </NavButton>
          ))}
          <Tray>
            {trayIcons.map((icon, i) => (
              <button key={i} aria-label={`Phân hệ ${i + 1}`}>
                <svg width="16" height="16" viewBox="0 0 24 24">{icon}</svg>
              </button>
            ))}
            <TrayMore aria-label="Thêm phân hệ">
              <svg width="9" height="14" viewBox="0 0 9 14"><path d="M1 1l2.500 2.500L1 6M5 1l2.500 2.500L5 6" fill="none" stroke="#000" strokeWidth="1.300" /><path d="M1.500 10h6l-3 3z" /></svg>
            </TrayMore>
          </Tray>
        </Sidebar>

        <Content>
          <TabBar>
            {tabs.map(([t, w]) => <Tab key={t} $w={w} $active={t.startsWith('Mua')}>{t}</Tab>)}
            <GearButton aria-label="Tùy chỉnh">
              <svg width="16" height="16" viewBox="0 0 16 16"><circle cx="8" cy="8" r="5.500" fill="#ddd" stroke="#777" strokeWidth="1" /><circle cx="8" cy="8" r="6.600" fill="none" stroke="#777" strokeWidth="1.700" strokeDasharray="2 2.150" /><circle cx="8" cy="8" r="2.300" fill="#f4f4f4" stroke="#777" /><path d="M1 8c0 4 3 6 7 5.500" fill="none" stroke="#3fae2a" strokeWidth="2.200" /><path d="M7 10.500l4 3-4 2.500z" fill="#3fae2a" /></svg>
              <Tri dir="down" color="#1d4f9c" />
            </GearButton>
          </TabBar>
          <Filters onSubmit={(e) => e.preventDefault()}>
            <Label htmlFor="period" $w={20}>Kỳ</Label>
            <Field $w={144}><select id="period"><option>Tùy chọn</option></select><FieldArrow><Tri dir="down" /></FieldArrow></Field>
            <Label htmlFor="from" $w={20}>Từ</Label>
            <Field $w={84}><input id="from" defaultValue="01/01/2019" /><FieldArrow><Tri dir="down" /></FieldArrow></Field>
            <Label htmlFor="to" $w={28}>Đến</Label>
            <Field $w={84}><input id="to" defaultValue="30/06/2021" /><FieldArrow><Tri dir="down" /></FieldArrow></Field>
            <Label htmlFor="status" $w={52}>Trạng thái</Label>
            <Field $w={88}><select id="status"><option>Tất cả</option></select><FieldArrow><Tri dir="down" /></FieldArrow></Field>
            <Label htmlFor="invoice" $w={48}>Nhận HĐ</Label>
            <Field $w={100}><select id="invoice"><option>Tất cả</option></select><FieldArrow><Tri dir="down" /></FieldArrow></Field>
            <LoadButton>Lấy dữ liệu</LoadButton>
          </Filters>

          <GridFrame>
            <GridRow>
              <Table $lastRow={21}>
                <Cols list={cols} />
                <thead>
                  <Head list={cols} sorted />
                  <tr>
                    {cols.map((col, i) => (
                      <FilterTd key={col.t} $pin={i === 2}>
                        <FilterCell>
                          <button aria-label={`Điều kiện ${col.t}`}><Op op={col.op} /></button>
                          <input aria-label={`Lọc ${col.t}`} />
                        </FilterCell>
                      </FilterTd>
                    ))}
                  </tr>
                </thead>
                <tbody>
                  {rows.map((row, r) => (
                    <tr key={r}>
                      {row.map((v, i) => <Td key={i} $align={cols[i].align} $pin={i === 2} $sel={r === 0}>{v}</Td>)}
                    </tr>
                  ))}
                </tbody>
                <tfoot>
                  <tr>
                    <SumTd $filled>Số dòng = 59</SumTd>
                    <SumTd colSpan={2} $pin />
                    <SumTd colSpan={3} />
                    <SumTd $filled>864.567.785,00</SumTd>
                    <SumTd $filled>4.529.982,00</SumTd>
                    <SumTd $filled>58.498.851,00</SumTd>
                    <SumTd $filled>890.741.225,00</SumTd>
                    <SumTd $filled>11</SumTd>
                  </tr>
                </tfoot>
              </Table>
              <VScroll>
                <ScrollButton aria-label="Cuộn lên"><Tri dir="up" /></ScrollButton>
                <VThumb />
                <ScrollButton aria-label="Cuộn xuống"><Tri dir="down" /></ScrollButton>
              </VScroll>
            </GridRow>
            <HScroll>
              <ScrollButton aria-label="Cuộn trái"><Tri dir="left" /></ScrollButton>
              <HTrack><HThumb $pct={51} /></HTrack>
              <ScrollButton aria-label="Cuộn phải"><Tri dir="right" /></ScrollButton>
              <Corner />
            </HScroll>
            <Highlight />
          </GridFrame>

          <SplitBar>
            <SplitHandle aria-label="Thu gọn"><svg width="7" height="4" viewBox="0 0 7 4"><path d="M0 0h7L3.500 4z" fill="#fff" /></svg></SplitHandle>
          </SplitBar>
          <DetailTab>Chi tiết</DetailTab>

          <GridFrame>
            <Table $lastRow={19}>
              <Cols list={detailCols} />
              <thead><Head list={detailCols} /></thead>
              <tbody>
                {Array.from({ length: 8 }, (_, r) => (
                  <tr key={r}>
                    {detailCols.map((col, i) => (
                      <Td key={col.t} $align={col.align} $pin={i === 0}>{r === 0 ? detailRow[i] : ''}</Td>
                    ))}
                  </tr>
                ))}
              </tbody>
              <tfoot>
                <tr>
                  <SumTd $filled $pin>Số dòng = 1</SumTd>
                  <SumTd colSpan={5} />
                  <SumTd $filled>0</SumTd>
                  <SumTd $filled>0</SumTd>
                  <SumTd $filled>1</SumTd>
                  <SumTd colSpan={2} />
                  <SumTd $filled>100.000,00</SumTd>
                  <SumTd />
                </tr>
              </tfoot>
            </Table>
            <HScroll>
              <ScrollButton aria-label="Cuộn trái"><Tri dir="left" /></ScrollButton>
              <HTrack><HThumb $pct={48} /></HTrack>
              <ScrollButton aria-label="Cuộn phải"><Tri dir="right" /></ScrollButton>
            </HScroll>
          </GridFrame>
        </Content>
      </Body>

      <StatusBar>
        <StatusCell $w={245}><StatusDot $color="#6f6ab0" /></StatusCell>
        <StatusCell $w={202}><StatusDot $color="#d9a000" /></StatusCell>
        <StatusCell $w={123}><StatusDot $color="#3a3f4a" /></StatusCell>
        <StatusCell $w={10} />
        <StatusCell />
        <StatusCell $w={182} />
        <StatusCell $w={31} />
        <StatusCell $w={32} />
        <StatusCell $w={37} />
        <StatusCell $w={36} />
        <StatusCell $w={53} />
        <StatusCell $w={64} />
      </StatusBar>
    </Shell>
  );
}
